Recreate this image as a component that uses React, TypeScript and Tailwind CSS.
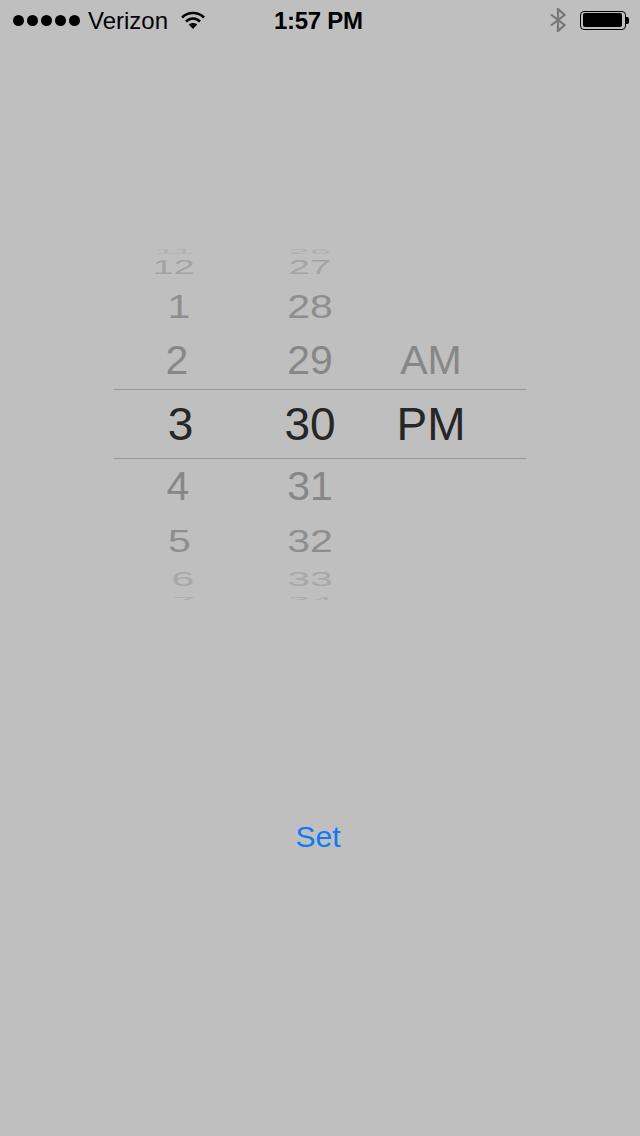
const rows = [
  { h: "h-[8px]", squash: "scale-y-[0.17] scale-x-[0.92]", color: "text-[#b0b0b0]", hour: "11", hourPad: "pr-[8px]", minute: "26", ampm: "" },
  { h: "h-[25px]", squash: "scale-y-[0.48] scale-x-[0.92]", color: "text-[#a3a3a3]", hour: "12", hourPad: "pr-[9px]", minute: "27", ampm: "" },
  { h: "h-[52px]", squash: "scale-y-[0.82]", color: "text-[#8e8e8e]", hour: "1", hourPad: "pl-[2px]", minute: "28", ampm: "" },
  { h: "h-[57px]", squash: "", color: "text-[#878787]", hour: "2", hourPad: "pr-[2px]", minute: "29", ampm: "AM" },
]

const lower = [
  { h: "h-[55px]", squash: "", color: "text-[#878787]", hour: "4", hourPad: "", minute: "31" },
  { h: "h-[55px]", squash: "scale-y-[0.76]", color: "text-[#8e8e8e]", hour: "5", hourPad: "pl-[3px]", minute: "32" },
  { h: "h-[20px]", squash: "scale-y-[0.48]", color: "text-[#a8a8a8]", hour: "6", hourPad: "pl-[10px]", minute: "33" },
  { h: "h-[22px]", squash: "scale-y-[0.2]", color: "text-[#adadad]", hour: "7", hourPad: "pl-[12px]", minute: "34" },
]

function Row({ h, squash, color, hour, hourPad, minute, ampm }: { h: string; squash: string; color: string; hour: string; hourPad: string; minute: string; ampm?: string }) {
  return (
    <div className={`grid grid-cols-[128px_136px_148px] content-center items-center text-[41px] leading-none ${h} ${color}`}>
      <div className={`flex justify-center ${hourPad}`}><span className={`block ${squash}`}>{hour}</span></div>
      <div className="flex justify-center"><span className={`block ${squash}`}>{minute}</span></div>
      <div className="flex justify-center pr-[42px]">{ampm}</div>
    </div>
  )
}

function StatusBar() {
  return (
    <div className="flex h-10 items-center text-black text-[24px]">
      <div className="flex items-center gap-[3px] ml-[13px]">
        <span className="w-[11px] h-[11px] rounded-full bg-black" />
        <span className="w-[11px] h-[11px] rounded-full bg-black" />
        <span className="w-[11px] h-[11px] rounded-full bg-black" />
        <span className="w-[11px] h-[11px] rounded-full bg-black" />
        <span className="w-[11px] h-[11px] rounded-full bg-black" />
      </div>
      <span className="ml-[8px] pt-[1px]">Verizon</span>
      <svg className="ml-[12px]" width="26" height="20" viewBox="0 0 26 20" fill="none" stroke="black" strokeWidth="2.6">
        <path d="M2 7.5 C8 1.5 18 1.5 24 7.5" />
        <path d="M6 11.5 C10 7.5 16 7.5 20 11.5" />
        <path d="M13 19 L8.8 14.6 C11 12.6 15 12.6 17.2 14.6 Z" fill="black" stroke="none" />
      </svg>
      <span className="ml-[68px] pt-[1px] font-bold tracking-[-0.3px]">1:57 PM</span>
      <div className="ml-auto mr-[11px] flex items-center gap-[13px]">
        <svg width="18" height="24" viewBox="0 0 18 24" fill="none" stroke="#777777" strokeWidth="2.2">
          <path d="M2 6.5 L15.5 17 L9 23 V1 L15.5 7 L2 17.5" />
        </svg>
        <div className="flex items-center">
          <div className="w-[46px] h-[19px] rounded-[4px] border border-black p-[1.5px]">
            <div className="w-[39px] h-full rounded-[2px] bg-black" />
          </div>
          <div className="w-[3px] h-[7px] bg-black rounded-r-[2px]" />
        </div>
      </div>
    </div>
  )
}

export default function App() {
  return (
    <div className="w-[640px] h-[1136px] bg-[#bfbfbf] overflow-hidden font-['Liberation_Sans',sans-serif]">
      <StatusBar />
      <div className="w-[412px] ml-[114px] mt-[207px] h-[353px] overflow-hidden">
        {rows.map((r) => <Row key={r.hour} {...r} />)}
        <div className="h-[70px] grid grid-cols-[128px_136px_148px] items-center border-y border-[#999999] text-[46px] leading-none text-[#262626]">
          <div className="flex justify-center pl-[5px]">3</div>
          <div className="flex justify-center">30</div>
          <div className="flex justify-center pr-[42px]">PM</div>
        </div>
        {lower.map((r) => <Row key={r.hour} {...r} />)}
      </div>
      <div className="mt-[222px] flex justify-center text-[30px] leading-none text-[#0f7bf5] pr-[4px]">Set</div>
    </div>
  )
}
